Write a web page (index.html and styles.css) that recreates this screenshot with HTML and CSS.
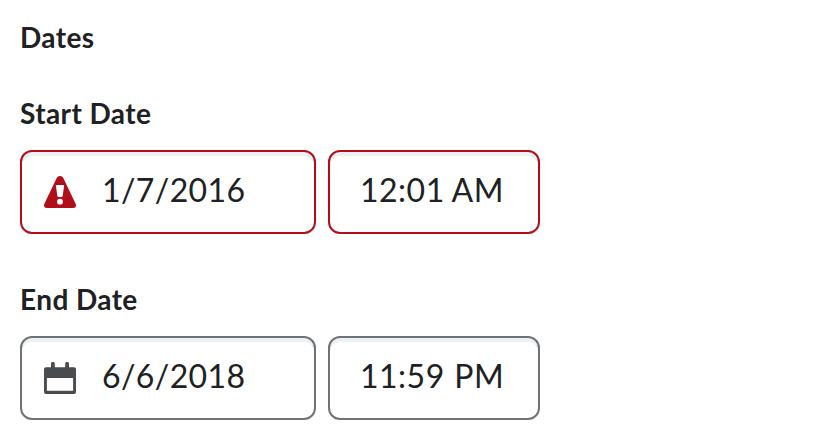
FILE: index.html
```html
<!DOCTYPE html>
<html lang="en">
<head>
<meta charset="utf-8">
<title>Dates</title>
<link rel="stylesheet" href="styles.css">
</head>
<body>
<main class="form">
  <h1 class="heading">Dates</h1>
  <section class="group">
    <h2 class="label">Start Date</h2>
    <div class="fields">
      <div class="field field-date invalid">
        <svg class="icon" width="32" height="32" viewBox="0 0 32 32"><path fill="#b00e18" d="M16 0c1.600 0 2.700.8 3.400 2.200l12.100 25.300c1.200 2.500.1 4.500-2.200 4.500H2.700C.4 32-.7 30 .5 27.500L12.600 2.200C13.300.8 14.400 0 16 0z"/><path fill="#fff" d="M12.700 9h6.600a.8.8 0 0 1 .8 1l-1.500 10.200a1 1 0 0 1-1 .8h-3.200a1 1 0 0 1-1-.8L11.900 10a.8.8 0 0 1 .8-1z"/><circle cx="16" cy="25.700" r="2.900" fill="#fff"/></svg>
        <span>1/7/2016</span>
      </div>
      <div class="field field-time invalid"><span class="am">12:01 AM</span></div>
    </div>
  </section>
  <section class="group">
    <h2 class="label">End Date</h2>
    <div class="fields">
      <div class="field field-date">
        <svg class="icon" width="32" height="32" viewBox="0 0 32 32"><path fill="#494c4e" fill-rule="evenodd" d="M7 1.800a1.900 1.900 0 0 1 3.800 0V5.300h10.400V1.800a1.900 1.900 0 0 1 3.800 0V5.300h5a2 2 0 0 1 2 2V30a2 2 0 0 1-2 2H2a2 2 0 0 1-2-2V7.300a2 2 0 0 1 2-2h5zM2.900 16v12.800h26.200V16z"/></svg>
        <span>6/6/2018</span>
      </div>
      <div class="field field-time"><span class="pm">11:59 PM</span></div>
    </div>
  </section>
</main>
</body>
</html>
```
FILE: styles.css
```css
* { box-sizing: border-box; }
body { margin: 0; background: #fff; color: #202122; font-family: Lato, sans-serif; }
.form { padding: 19px 20px 0; }
.heading, .label { margin: 0; font-size: 28px; line-height: 36px; font-weight: 700; letter-spacing: 0.4px; }
.group { margin-top: 40px; }
.group + .group { margin-top: 47px; }
.fields { display: flex; gap: 12px; margin-top: 19px; }
.field { display: flex; align-items: center; height: 84px; border: 2px solid #6e7376; border-radius: 12px; background: #fff; box-shadow: inset 0 4px 0 #eff0f1; font-size: 32px; line-height: 48px; letter-spacing: 0.4px; white-space: nowrap; }
.field span { position: relative; top: -2px; }
.field-date { width: 296px; padding-left: 22px; gap: 26px; }
.field-time { width: 212px; padding-left: 30px; }
.am { letter-spacing: 0.5px; word-spacing: -0.8px; }
.pm { letter-spacing: 0.5px; word-spacing: 0.8px; }
.invalid { border-color: #b00e18; }
.icon { flex: none; }
```
